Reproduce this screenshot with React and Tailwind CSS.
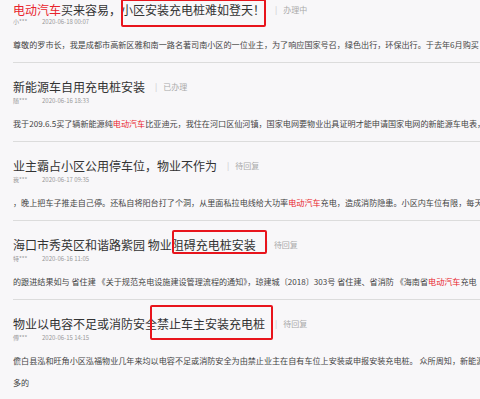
import React from "react";

const font = { fontFamily: '"Noto Sans CJK SC", "Noto Sans", sans-serif' };

const Red = ({ children }) => <span className="text-[#e8232c]">{children}</span>;

const items = [
  {
    title: <><Red>电动汽车</Red>买来容易，小区安装充电桩难如登天！</>,
    status: "办理中",
    name: "小***",
    date: "2020-06-18 00:07",
    lines: ["尊敬的罗市长，我是成都市高新区雅和南一路名著司南小区的一位业主，为了响应国家号召，绿色出行，环保出行。于去年6月购买"],
    pad: "pt-[2px]",
    metaGap: "mt-0",
    box: "left-[108px] top-[-1px] w-[145px] h-[28px]",
  },
  {
    title: "新能源车自用充电桩安装",
    status: "已办理",
    name: "随***",
    date: "2020-06-16 18:33",
    lines: [<>我于209.6.5买了辆新能源纯<Red>电动汽车</Red>比亚迪元，我住在河口区仙河镇，国家电网要物业出具证明才能申请国家电网的新能源车电表，</>],
  },
  {
    title: "业主霸占小区公用停车位，物业不作为",
    status: "待回复",
    name: "我***",
    date: "2020-06-17 09:35",
    lines: [<>，晚上把车子推走自己停。还私自将阳台打了个洞，从里面私拉电线给大功率<Red>电动汽车</Red>充电，造成消防隐患。小区内车位有限，每天</>],
  },
  {
    title: "海口市秀英区和谐路紫园 物业阻碍充电桩安装",
    status: "待回复",
    name: "特***",
    date: "2020-06-16 11:05",
    lines: [<>的跟进结果如与 省住建 《关于规范充电设施建设管理流程的通知》，琼建城〔2018〕303号 省住建、省消防 《海南省<Red>电动汽车</Red>充电</>],
    box: "left-[159px] top-[9px] w-[95px] h-[24px]",
  },
  {
    title: "物业以电容不足或消防安全禁止车主安装充电桩",
    status: "待回复",
    name: "傅***",
    date: "2020-06-15 14:15",
    lines: ["儋白县泓和旺角小区泓福物业几年来均以电容不足或消防安全为由禁止业主在自有车位上安装或申报安装充电桩。 众所周知，新能源", "多的"],
    box: "left-[137px] top-[5px] w-[123px] h-[35px]",
  },
];

const Item = ({ item }) => (
  <div className={`relative border-b border-[#dcdcdc] pb-[6px] ${item.pad || "pt-[16px]"}`}>
    <div className="flex items-center whitespace-nowrap h-[16px]">
      <span className="text-[12px] leading-[16px] text-[#333]">{item.title}</span>
      <span className="ml-[10px] text-[8px] text-[#c8c8c8] leading-[16px]">|</span>
      <span className="ml-[6px] text-[8px] text-[#aaa] leading-[16px]">{item.status}</span>
    </div>
    <div className={`flex items-center h-[8px] text-[6px] leading-[8px] text-[#999] ${item.metaGap || "mt-[2px]"}`}>
      <span className="w-[29px]">{item.name}</span>
      <span>{item.date}</span>
    </div>
    <div className="mt-[8px]">
      {item.lines.map((l, i) => (
        <div key={i} className="text-[8.1px] leading-[22px] text-[#444] whitespace-nowrap overflow-hidden">
          {l}
        </div>
      ))}
    </div>
    {item.box && (
      <div className={`absolute border-2 border-[#e8141c] rounded-[2px] ${item.box}`}></div>
    )}
  </div>
);

export default function App() {
  return (
    <div className="w-[480px] h-[399px] overflow-hidden bg-[#f8f7f9] pl-[13px]" style={font}>
      {items.map((item, i) => (
        <Item key={i} item={item} />
      ))}
    </div>
  );
}
